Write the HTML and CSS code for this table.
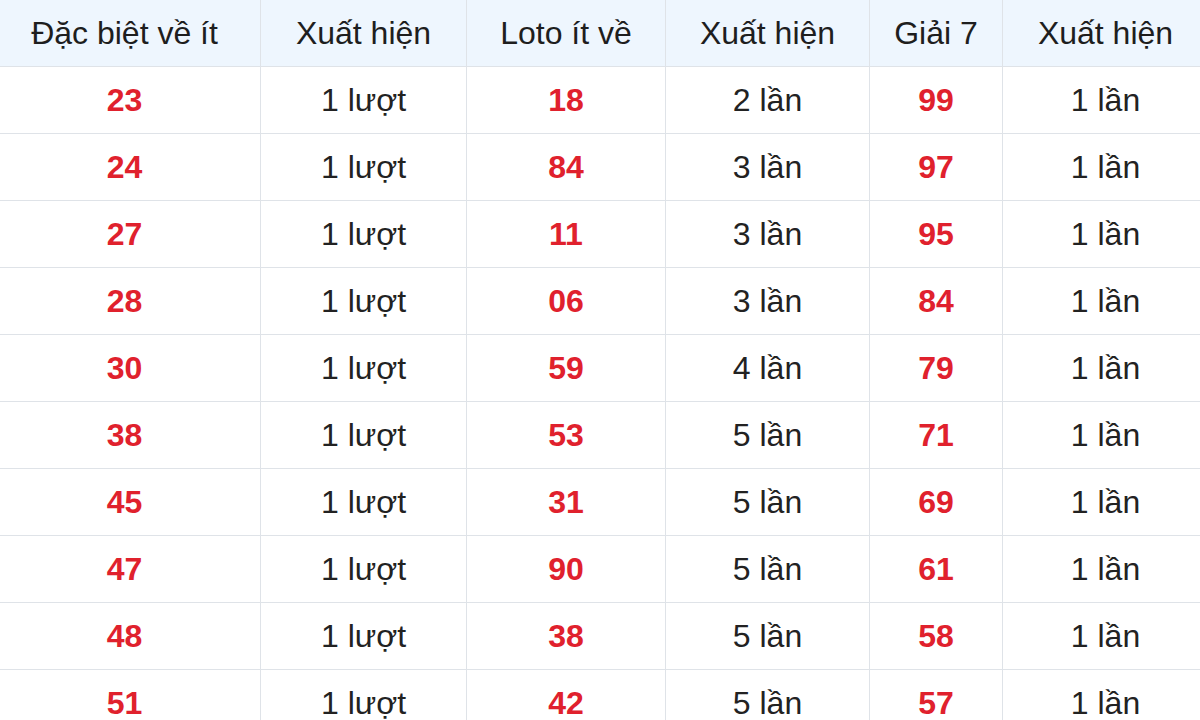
FILE: index.html
```html
<!DOCTYPE html>
<html lang="vi">
<head>
<meta charset="utf-8">
<title>Thống kê</title>
<link rel="stylesheet" href="styles.css">
</head>
<body>
<table class="stats">
  <colgroup>
    <col class="c1"><col class="c2"><col class="c3"><col class="c4"><col class="c5"><col class="c6">
  </colgroup>
  <thead>
    <tr><th>Đặc biệt về ít</th><th>Xuất hiện</th><th>Loto ít về</th><th>Xuất hiện</th><th>Giải 7</th><th>Xuất hiện</th></tr>
  </thead>
  <tbody>
    <tr><td class="num">23</td><td>1 lượt</td><td class="num">18</td><td>2 lần</td><td class="num">99</td><td>1 lần</td></tr>
    <tr><td class="num">24</td><td>1 lượt</td><td class="num">84</td><td>3 lần</td><td class="num">97</td><td>1 lần</td></tr>
    <tr><td class="num">27</td><td>1 lượt</td><td class="num">11</td><td>3 lần</td><td class="num">95</td><td>1 lần</td></tr>
    <tr><td class="num">28</td><td>1 lượt</td><td class="num">06</td><td>3 lần</td><td class="num">84</td><td>1 lần</td></tr>
    <tr><td class="num">30</td><td>1 lượt</td><td class="num">59</td><td>4 lần</td><td class="num">79</td><td>1 lần</td></tr>
    <tr><td class="num">38</td><td>1 lượt</td><td class="num">53</td><td>5 lần</td><td class="num">71</td><td>1 lần</td></tr>
    <tr><td class="num">45</td><td>1 lượt</td><td class="num">31</td><td>5 lần</td><td class="num">69</td><td>1 lần</td></tr>
    <tr><td class="num">47</td><td>1 lượt</td><td class="num">90</td><td>5 lần</td><td class="num">61</td><td>1 lần</td></tr>
    <tr><td class="num">48</td><td>1 lượt</td><td class="num">38</td><td>5 lần</td><td class="num">58</td><td>1 lần</td></tr>
    <tr><td class="num">51</td><td>1 lượt</td><td class="num">42</td><td>5 lần</td><td class="num">57</td><td>1 lần</td></tr>
  </tbody>
</table>
</body>
</html>
```

FILE: styles.css
```css
html, body {
  margin: 0;
  padding: 0;
  background: #ffffff;
  overflow: hidden;
}

.stats {
  width: 1220px;
  margin-left: -12px;
  margin-top: -1px;
  border-collapse: collapse;
  table-layout: fixed;
  font-family: "Liberation Sans", Arial, sans-serif;
  font-size: 32px;
  color: #222222;
}

.c1 { width: 272px; }
.c2 { width: 206px; }
.c3 { width: 199px; }
.c4 { width: 204px; }
.c5 { width: 133px; }
.c6 { width: 206px; }

.stats th,
.stats td {
  height: 66px;
  padding: 0;
  border: 1px solid #dfe3e8;
  text-align: center;
  vertical-align: middle;
  white-space: nowrap;
}

.stats th {
  background: #eef6fe;
  font-weight: normal;
  color: #1e1e1e;
}

.stats td.num {
  color: #e0212d;
  font-weight: bold;
}
```
